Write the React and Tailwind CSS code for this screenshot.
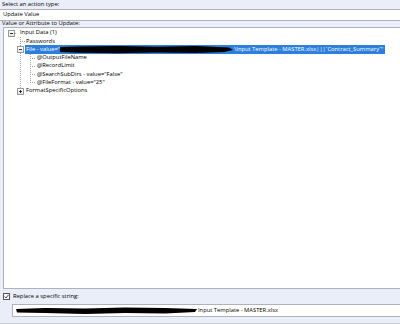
import React from "react";

function Expander({ plus }) {
  return (
    <span className="relative inline-flex shrink-0 w-[7px] h-[7px] border border-[#9a9a9a] bg-gradient-to-b from-white to-[#e4e4e4] items-center justify-center z-10">
      <span className="absolute w-[3px] h-px bg-[#333]" />
      {plus && <span className="absolute w-px h-[3px] bg-[#333]" />}
    </span>
  );
}

function Row({ children, className = "" }) {
  return <div className={"h-[8.3px] flex items-center whitespace-nowrap " + className}>{children}</div>;
}

export default function App() {
  return (
    <div className="w-[400px] h-[324px] overflow-hidden bg-[#eaeef8] flex flex-col text-[5.8px] font-medium leading-none text-black font-['Open_Sans','Noto_Sans',sans-serif]">
      <div className="h-[9px] pl-[2px] flex items-center">Select an action type:</div>
      <div className="h-[12px] bg-white border-y border-[#aeb2ba] pl-[3px] flex items-center">Update Value</div>
      <div className="h-[6px] pl-[2px] flex items-center">Value or Attribute to Update:</div>
      <div className="ml-[3px] h-[262px] bg-white border border-r-0 border-[#aeb2ba] relative pt-[1px]">
        <svg className="absolute left-0 top-0" width="397" height="100">
          <g stroke="#a0a0a0" strokeWidth="1" strokeDasharray="1 1" shapeRendering="crispEdges">
            <line x1="10.5" y1="5" x2="12" y2="5" />
            <line x1="16.5" y1="9" x2="16.5" y2="63" />
            <line x1="16" y1="13.5" x2="22" y2="13.5" />
            <line x1="26.5" y1="26" x2="26.5" y2="54" />
            <line x1="26" y1="30.5" x2="32" y2="30.5" />
            <line x1="26" y1="38.5" x2="32" y2="38.5" />
            <line x1="26" y1="46.5" x2="32" y2="46.5" />
            <line x1="26" y1="54.5" x2="32" y2="54.5" />
          </g>
        </svg>
        <div className="relative">
          <Row className="pl-[4px]">
            <Expander />
            <span className="ml-[5px]">Input Data (1)</span>
          </Row>
          <Row className="pl-[22px]">Passwords</Row>
          <Row className="pl-[13px]">
            <Expander />
            <span className="ml-[1px] h-[9px] w-[360px] bg-[#2d7fdc] text-white flex items-center pl-[1px] pr-[2px] overflow-hidden">
              <span className="shrink-0">File - value="</span>
              <svg className="flex-1 min-w-0 h-[9px]" viewBox="0 0 180 9" preserveAspectRatio="none">
                <path d="M0 2 L20 1.5 L60 1 L100 1.8 L140 1 L175 2.5 L179 5 L170 7 L140 8 L100 7.5 L60 8.2 L20 7.8 L0 7 Z" fill="#000" />
              </svg>
              <span className="shrink-0">\Input Template - MASTER.xlsx|||`Contract_Summary`"</span>
            </span>
          </Row>
          <Row className="pl-[33px]">@OutputFileName</Row>
          <Row className="pl-[33px]">@RecordLimit</Row>
          <Row className="pl-[33px]">@SearchSubDirs - value="False"</Row>
          <Row className="pl-[33px]">@FileFormat - value="25"</Row>
          <Row className="pl-[13px]">
            <Expander plus />
            <span className="ml-[2px]">FormatSpecificOptions</span>
          </Row>
        </div>
      </div>
      <div className="h-[15px] flex items-center pl-[3px] gap-[3px]">
        <span className="w-[7px] h-[7px] border border-[#555] bg-white flex items-center justify-center">
          <svg width="5" height="5" viewBox="0 0 5 5"><path d="M0.5 2.5 L2 4 L4.5 0.8" stroke="#333" strokeWidth="0.9" fill="none" /></svg>
        </span>
        <span>Replace a specific string:</span>
      </div>
      <div className="ml-[12px] h-[13px] bg-white border border-r-0 border-[#aeb2ba] flex items-center pl-[2px] whitespace-nowrap">
        <svg width="183" height="9" className="shrink-0">
          <path d="M1 3 L30 2 L70 2.5 L110 1.5 L150 2 L182 3 L180 6 L150 7.5 L110 7 L70 8 L30 7 L2 6.5 Z" fill="#000" />
        </svg>
        <span>Input Template - MASTER.xlsx</span>
      </div>
      <div className="mt-[6px] h-px bg-[#c8ccd4]" />
    </div>
  );
}
